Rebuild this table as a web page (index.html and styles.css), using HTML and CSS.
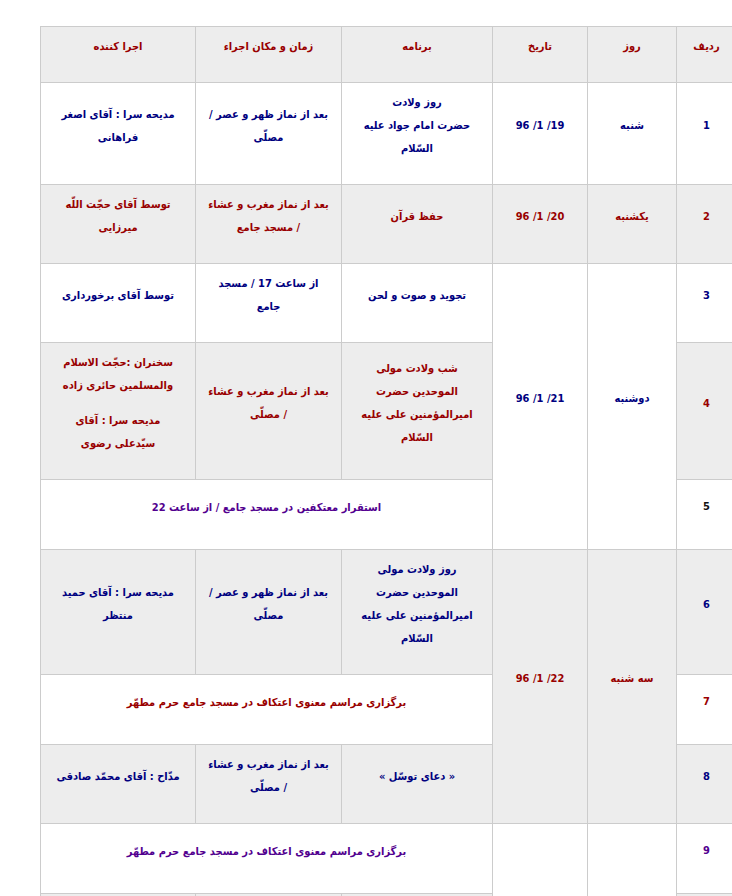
FILE: index.html
```html
<!DOCTYPE html>
<html lang="fa">
<head>
<meta charset="utf-8">
<title>برنامه</title>
<link rel="stylesheet" href="styles.css">
</head>
<body>
<div class="page">
<table class="sched" dir="rtl">
  <colgroup>
    <col class="c-num"><col class="c-day"><col class="c-date"><col class="c-prog"><col class="c-time"><col class="c-exec">
  </colgroup>
  <tr class="head">
    <th>ردیف</th><th>روز</th><th>تاریخ</th><th>برنامه</th><th>زمان و مکان اجراء</th><th>اجرا کننده</th>
  </tr>
  <tr class="odd navy">
    <td>1</td><td>شنبه</td><td>19/ 1/ 96</td>
    <td>روز ولادت<br>حضرت امام جواد علیه<br>السّلام</td>
    <td>بعد از نماز ظهر و عصر /<br>مصلّی</td>
    <td>مدیحه سرا : آقای اصغر<br>فراهانی</td>
  </tr>
  <tr class="even red">
    <td>2</td><td>یکشنبه</td><td>20/ 1/ 96</td>
    <td>حفظ قرآن</td>
    <td>بعد از نماز مغرب و عشاء<br>/ مسجد جامع</td>
    <td>توسط آقای حجّت اللّه<br>میرزایی</td>
  </tr>
  <tr class="odd navy">
    <td>3</td><td rowspan="3">دوشنبه</td><td rowspan="3">21/ 1/ 96</td>
    <td>تجوید و صوت و لحن</td>
    <td>از ساعت 17 / مسجد<br>جامع</td>
    <td>توسط آقای برخورداری</td>
  </tr>
  <tr class="even red">
    <td class="navy">4</td>
    <td>شب ولادت مولی<br>الموحدین حضرت<br>امیرالمؤمنین علی علیه<br>السّلام</td>
    <td>بعد از نماز مغرب و عشاء<br>/ مصلّی</td>
    <td><p class="para">سخنران :حجّت الاسلام<br>والمسلمین حائری زاده</p><p class="para">مدیحه سرا : آقای<br>سیّدعلی رضوی</p></td>
  </tr>
  <tr class="odd purple">
    <td class="black">5</td>
    <td colspan="3" class="wide">استقرار معتکفین در مسجد جامع / از ساعت 22</td>
  </tr>
  <tr class="even navy">
    <td>6</td><td rowspan="3" class="red">سه شنبه</td><td rowspan="3" class="red">22/ 1/ 96</td>
    <td>روز ولادت مولی<br>الموحدین حضرت<br>امیرالمؤمنین علی علیه<br>السّلام</td>
    <td>بعد از نماز ظهر و عصر /<br>مصلّی</td>
    <td>مدیحه سرا : آقای حمید<br>منتظر</td>
  </tr>
  <tr class="odd red">
    <td>7</td>
    <td colspan="3" class="wide">برگزاری مراسم معنوی اعتکاف در مسجد جامع حرم مطهّر</td>
  </tr>
  <tr class="even navy">
    <td>8</td>
    <td>« دعای توسّل »</td>
    <td>بعد از نماز مغرب و عشاء<br>/ مصلّی</td>
    <td>مدّاح : آقای محمّد صادقی</td>
  </tr>
  <tr class="odd purple">
    <td>9</td><td rowspan="2"></td><td rowspan="2"></td>
    <td colspan="3" class="wide">برگزاری مراسم معنوی اعتکاف در مسجد جامع حرم مطهّر</td>
  </tr>
  <tr class="even navy">
    <td class="blank"></td>
    <td class="blank"></td>
    <td class="blank"></td>
    <td class="blank"></td>
  </tr>
</table>
</div>
</body>
</html>
```

FILE: styles.css
```css
html, body {
  margin: 0;
  padding: 0;
  background: #ffffff;
  overflow: hidden;
}

.page {
  padding: 26px 0 0 40px;
}

.sched {
  width: 696px;
  table-layout: fixed;
  border-collapse: collapse;
  font-family: "DejaVu Sans Condensed", "DejaVu Sans", sans-serif;
  font-weight: bold;
  font-size: 11px;
  line-height: 23px;
}

.c-num { width: 60px; }
.c-day { width: 89px; }
.c-date { width: 95px; }
.c-prog { width: 151px; }
.c-time { width: 146px; }
.c-exec { width: 155px; }

.sched th,
.sched td {
  border: 1px solid #cccccc;
  padding: 8px 4px 24px;
  text-align: center;
  vertical-align: middle;
  white-space: nowrap;
}

.sched th {
  background: #ededed;
  color: #990000;
  font-weight: bold;
}

.sched tr.even td { background: #ededed; }
.sched tr.odd td { background: #ffffff; }

.sched td.wide {
  padding-top: 16px;
  padding-bottom: 30px;
}

.sched td.blank {
  height: 48px;
}

.para {
  margin: 0 0 12px;
}
.para:last-child {
  margin-bottom: 0;
}

.navy, .sched .navy td, .sched td.navy { color: #000080; }
.red, .sched .red td, .sched td.red { color: #990000; }
.purple, .sched .purple td, .sched td.purple { color: #52008f; }
.sched td.black { color: #111111; }
```
